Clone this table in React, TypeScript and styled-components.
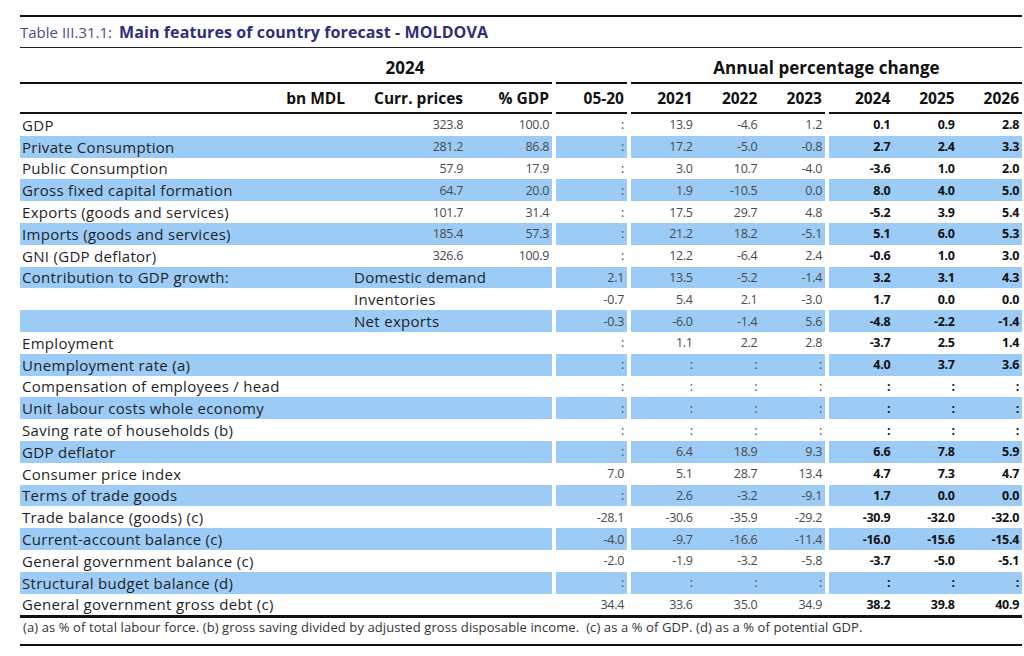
import React from "react";
import styled, { createGlobalStyle } from "styled-components";

const GlobalStyle = createGlobalStyle`
  html, body {
    margin: 0;
    padding: 0;
    background: #ffffff;
  }
  body {
    font-family: "Open Sans", "Liberation Sans", sans-serif;
    color: #1c1c1c;
  }
`;

type RowData = {
  label: string;
  sub?: string;
  curr?: string;
  gdp?: string;
  avg: string;
  hist: string[];
  fc: string[];
};

const C = ":";

const rows: RowData[] = [
  { label: "GDP", curr: "323.8", gdp: "100.0", avg: C, hist: ["13.9", "-4.6", "1.2"], fc: ["0.1", "0.9", "2.8"] },
  { label: "Private Consumption", curr: "281.2", gdp: "86.8", avg: C, hist: ["17.2", "-5.0", "-0.8"], fc: ["2.7", "2.4", "3.3"] },
  { label: "Public Consumption", curr: "57.9", gdp: "17.9", avg: C, hist: ["3.0", "10.7", "-4.0"], fc: ["-3.6", "1.0", "2.0"] },
  { label: "Gross fixed capital formation", curr: "64.7", gdp: "20.0", avg: C, hist: ["1.9", "-10.5", "0.0"], fc: ["8.0", "4.0", "5.0"] },
  { label: "Exports (goods and services)", curr: "101.7", gdp: "31.4", avg: C, hist: ["17.5", "29.7", "4.8"], fc: ["-5.2", "3.9", "5.4"] },
  { label: "Imports (goods and services)", curr: "185.4", gdp: "57.3", avg: C, hist: ["21.2", "18.2", "-5.1"], fc: ["5.1", "6.0", "5.3"] },
  { label: "GNI (GDP deflator)", curr: "326.6", gdp: "100.9", avg: C, hist: ["12.2", "-6.4", "2.4"], fc: ["-0.6", "1.0", "3.0"] },
  { label: "Contribution to GDP growth:", sub: "Domestic demand", avg: "2.1", hist: ["13.5", "-5.2", "-1.4"], fc: ["3.2", "3.1", "4.3"] },
  { label: "", sub: "Inventories", avg: "-0.7", hist: ["5.4", "2.1", "-3.0"], fc: ["1.7", "0.0", "0.0"] },
  { label: "", sub: "Net exports", avg: "-0.3", hist: ["-6.0", "-1.4", "5.6"], fc: ["-4.8", "-2.2", "-1.4"] },
  { label: "Employment", avg: C, hist: ["1.1", "2.2", "2.8"], fc: ["-3.7", "2.5", "1.4"] },
  { label: "Unemployment rate (a)", avg: C, hist: [C, C, C], fc: ["4.0", "3.7", "3.6"] },
  { label: "Compensation of employees / head", avg: C, hist: [C, C, C], fc: [C, C, C] },
  { label: "Unit labour costs whole economy", avg: C, hist: [C, C, C], fc: [C, C, C] },
  { label: "Saving rate of households (b)", avg: C, hist: [C, C, C], fc: [C, C, C] },
  { label: "GDP deflator", avg: C, hist: ["6.4", "18.9", "9.3"], fc: ["6.6", "7.8", "5.9"] },
  { label: "Consumer price index", avg: "7.0", hist: ["5.1", "28.7", "13.4"], fc: ["4.7", "7.3", "4.7"] },
  { label: "Terms of trade goods", avg: C, hist: ["2.6", "-3.2", "-9.1"], fc: ["1.7", "0.0", "0.0"] },
  { label: "Trade balance (goods) (c)", avg: "-28.1", hist: ["-30.6", "-35.9", "-29.2"], fc: ["-30.9", "-32.0", "-32.0"] },
  { label: "Current-account balance (c)", avg: "-4.0", hist: ["-9.7", "-16.6", "-11.4"], fc: ["-16.0", "-15.6", "-15.4"] },
  { label: "General government balance (c)", avg: "-2.0", hist: ["-1.9", "-3.2", "-5.8"], fc: ["-3.7", "-5.0", "-5.1"] },
  { label: "Structural budget balance (d)", avg: C, hist: [C, C, C], fc: [C, C, C] },
  { label: "General government gross debt (c)", avg: "34.4", hist: ["33.6", "35.0", "34.9"], fc: ["38.2", "39.8", "40.9"] },
];

const GROUPS = "532px 71px 194px 193px";
const LEFT_COLS = "334px 112px 86px";
const YEAR_COLS = "1fr 1fr 1fr";
const SHADE = "#9ccbf6";

const Sheet = styled.div`
  width: 1002px;
  padding: 15px 0 0 20px;
`;

const Rule = styled.div<{ $h: number }>`
  height: ${(p) => p.$h}px;
  background: #111111;
`;

const Caption = styled.div`
  height: 30px;
  display: flex;
  align-items: center;
  gap: 7px;
  border-bottom: 1.5px solid #222222;
`;

const CaptionNo = styled.span`
  color: #4d4d85;
  font-size: 15px;
`;

const CaptionText = styled.span`
  color: #2f2e7c;
  font-weight: 700;
  font-size: 16px;
  letter-spacing: 0.1px;
`;

const Band = styled.div<{ $h: number }>`
  display: grid;
  grid-template-columns: ${GROUPS};
  column-gap: 4px;
  height: ${(p) => p.$h}px;
`;

const SpanHead = styled.div<{ $col: string; $padLeft?: number }>`
  grid-column: ${(p) => p.$col};
  display: flex;
  align-items: center;
  justify-content: center;
  padding-top: 4px;
  padding-left: ${(p) => p.$padLeft ?? 0}px;
  border-bottom: 2px solid #111111;
  font-weight: 700;
  font-size: 17px;
  color: #111111;
`;

const HeadGroup = styled.div<{ $cols: string }>`
  display: grid;
  grid-template-columns: ${(p) => p.$cols};
  align-items: center;
  border-bottom: 2.5px solid #111111;
  font-weight: 700;
  font-size: 15.5px;
  color: #111111;
`;

const HeadCell = styled.span<{ $pad?: number }>`
  text-align: right;
  padding-right: ${(p) => p.$pad ?? 3}px;
  white-space: nowrap;
`;

const Cells = styled.div<{ $cols: string; $shade: boolean }>`
  display: grid;
  grid-template-columns: ${(p) => p.$cols};
  align-items: center;
  background: ${(p) => (p.$shade ? SHADE : "transparent")};
`;

const Label = styled.span`
  padding-left: 2px;
  font-size: 15px;
  letter-spacing: 0.3px;
  color: #1f1f1f;
  white-space: nowrap;
`;

const SubLabel = styled.span`
  grid-column: 2 / 4;
  font-size: 15px;
  letter-spacing: 0.3px;
  color: #1f1f1f;
  white-space: nowrap;
`;

const Num = styled.span<{ $bold?: boolean }>`
  text-align: right;
  padding-right: 3px;
  font-size: 12.5px;
  font-weight: ${(p) => (p.$bold ? 700 : 400)};
  color: ${(p) => (p.$bold ? "#111111" : "#4a4a4a")};
  letter-spacing: -0.3px;
  white-space: nowrap;
`;

const Footnote = styled.div`
  height: 18px;
  display: flex;
  align-items: center;
  padding-left: 3px;
  font-size: 13px;
  color: #333333;
  letter-spacing: 0.1px;
  white-space: nowrap;
`;

const Spacer = styled.div`
  height: 8px;
`;

const DataRow: React.FC<{ row: RowData; shade: boolean }> = ({ row, shade }) => (
  <Band $h={21.8}>
    <Cells $cols={LEFT_COLS} $shade={shade}>
      <Label>{row.label}</Label>
      {row.sub ? (
        <SubLabel>{row.sub}</SubLabel>
      ) : (
        <>
          <Num>{row.curr}</Num>
          <Num>{row.gdp}</Num>
        </>
      )}
    </Cells>
    <Cells $cols="1fr" $shade={shade}>
      <Num>{row.avg}</Num>
    </Cells>
    <Cells $cols={YEAR_COLS} $shade={shade}>
      {row.hist.map((v, i) => (
        <Num key={i}>{v}</Num>
      ))}
    </Cells>
    <Cells $cols={YEAR_COLS} $shade={shade}>
      {row.fc.map((v, i) => (
        <Num key={i} $bold>
          {v}
        </Num>
      ))}
    </Cells>
  </Band>
);

const App: React.FC = () => {
  return (
    <>
      <GlobalStyle />
      <Sheet>
        <Rule $h={2} />
        <Caption>
          <CaptionNo>Table III.31.1:</CaptionNo>
          <CaptionText>Main features of country forecast - MOLDOVA</CaptionText>
        </Caption>

        <Band $h={36}>
          <SpanHead $col="1 / 2" $padLeft={238}>
            2024
          </SpanHead>
          <SpanHead $col="2 / 3" />
          <SpanHead $col="3 / 5">Annual percentage change</SpanHead>
        </Band>

        <Band $h={30}>
          <HeadGroup $cols={LEFT_COLS}>
            <HeadCell $pad={9}>bn MDL</HeadCell>
            <HeadCell>Curr. prices</HeadCell>
            <HeadCell>% GDP</HeadCell>
          </HeadGroup>
          <HeadGroup $cols="1fr">
            <HeadCell>05-20</HeadCell>
          </HeadGroup>
          <HeadGroup $cols={YEAR_COLS}>
            <HeadCell>2021</HeadCell>
            <HeadCell>2022</HeadCell>
            <HeadCell>2023</HeadCell>
          </HeadGroup>
          <HeadGroup $cols={YEAR_COLS}>
            <HeadCell>2024</HeadCell>
            <HeadCell>2025</HeadCell>
            <HeadCell>2026</HeadCell>
          </HeadGroup>
        </Band>

        {rows.map((r, i) => (
          <DataRow key={i} row={r} shade={i % 2 === 1} />
        ))}

        <Rule $h={3} />
        <Footnote>
          (a) as % of total labour force. (b) gross saving divided by adjusted gross disposable income.&nbsp; (c) as a % of GDP. (d) as a % of potential GDP.
        </Footnote>
        <Spacer />
        <Rule $h={2} />
      </Sheet>
    </>
  );
};

export default App;
